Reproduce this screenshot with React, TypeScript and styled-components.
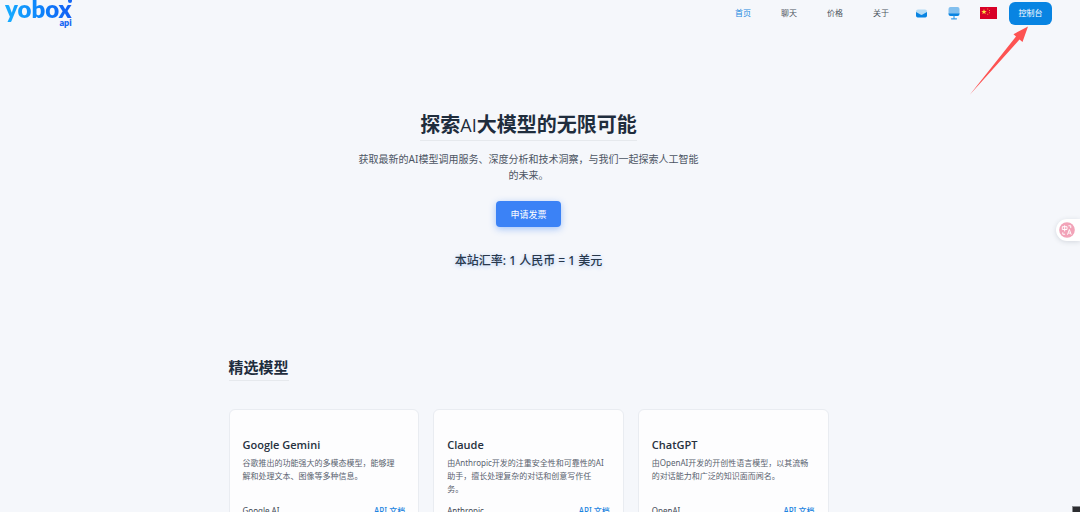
import React from 'react';
import styled, { createGlobalStyle } from 'styled-components';

const GlobalStyle = createGlobalStyle`
  * { box-sizing: border-box; }
  body {
    margin: 0;
    background: #f5f7fb;
    color: #1f2d3d;
    font-family: "Noto Sans", "Noto Sans CJK SC", sans-serif;
  }
  h1, h2, h3, p { margin: 0; }
`;

const Page = styled.div`
  position: relative;
  height: 100vh;
  overflow: hidden;
`;

const Header = styled.header`
  display: flex;
  justify-content: space-between;
  align-items: flex-start;
  height: 28px;
  padding: 0 28px 0 5px;
`;

const Logo = styled.a`
  position: relative;
  display: flex;
  flex-direction: column;
  align-items: flex-end;
  font-family: Lato, sans-serif;
  font-weight: 800;
  text-decoration: none;
`;

const LogoName = styled.span`
  margin-bottom: -6px;
  padding-bottom: 5px;
  font-size: 24px;
  line-height: 18px;
  background: linear-gradient(75deg, #16a9ff 10%, #0d86fb 50%, #1262f5 90%);
  background-clip: text;
  color: transparent;
`;

const LogoSub = styled.span`
  font-size: 9px;
  line-height: 12px;
  color: #1767f2;
`;

const LogoDot = styled.span`
  position: absolute;
  top: 0;
  right: 0;
  width: 4px;
  height: 3px;
  border-radius: 0 0 2px 2px;
  background: #1668f5;
`;

const Actions = styled.div`
  display: flex;
  align-items: center;
  height: 26px;
`;

const Nav = styled.nav`
  display: flex;
  gap: 30px;
  margin-right: 27px;
`;

const NavLink = styled.a<{ $active?: boolean }>`
  font-size: 8px;
  line-height: 12px;
  color: ${p => (p.$active ? '#1c8ae0' : '#4d5661')};
  text-decoration: none;
`;

const IconButton = styled.button`
  display: flex;
  padding: 0;
  border: 0;
  background: none;
`;

const Icons = styled.div`
  display: flex;
  align-items: center;
  gap: 19px;
  margin-right: 12px;
`;

const ConsoleButton = styled.button`
  width: 43px;
  height: 23px;
  padding: 0;
  border: 0;
  border-radius: 6px;
  background: #0884e2;
  color: #fff;
  font: 400 8px/12px "Noto Sans", "Noto Sans CJK SC", sans-serif;
`;

const Content = styled.div`
  padding-right: 23px;
`;

const Main = styled.main`
  max-width: 600px;
  margin: 0 auto;
`;

const Hero = styled.section`
  display: flex;
  flex-direction: column;
  align-items: center;
  padding-top: 82px;
  text-align: center;
`;

const HeroTitle = styled.h1`
  height: 31px;
  border-bottom: 1px solid #e6e9ed;
  font-size: 20px;
  line-height: 30px;
  font-weight: 700;
`;

const Latin = styled.span`
  font-family: "Open Sans", sans-serif;
  font-size: 18px;
  font-weight: 400;
`;

const HeroText = styled.p`
  margin-top: 10px;
  font-size: 10px;
  line-height: 16px;
  color: #4c5563;
  white-space: pre-line;
`;

const InvoiceButton = styled.button`
  width: 65px;
  height: 26px;
  margin-top: 18px;
  padding: 2px 0 0;
  border: 0;
  border-radius: 4px;
  background: #3b82f6;
  color: #fff;
  box-shadow: 0 2px 7px rgba(59, 130, 246, 0.45);
  font: 400 9px/14px "Noto Sans", "Noto Sans CJK SC", sans-serif;
`;

const Rate = styled.p`
  margin-top: 25px;
  font-size: 12px;
  line-height: 18px;
  font-weight: 500;
  color: #28384c;
  text-shadow: 0 1px 4px rgba(59, 130, 246, 0.4);
`;

const SectionTitle = styled.h2`
  display: inline-block;
  height: 25px;
  margin-top: 86px;
  border-bottom: 1px solid #e6e9ed;
  font-size: 15px;
  line-height: 23px;
  font-weight: 700;
`;

const Cards = styled.div`
  display: grid;
  grid-template-columns: repeat(3, 1fr);
  gap: 14px;
  margin-top: 28px;
`;

const Card = styled.article`
  padding: 27px 13px 14px;
  border: 1px solid #e9ecf1;
  border-radius: 6px;
  background: #fdfdfe;
`;

const CardTitle = styled.h3`
  font-family: "Open Sans", "Noto Sans CJK SC", sans-serif;
  font-size: 11px;
  line-height: 15px;
  font-weight: 600;
  color: #27313f;
`;

const CardText = styled.p`
  height: 39px;
  margin-top: 4px;
  font-size: 8px;
  line-height: 13px;
  color: #59626e;
  white-space: pre;
`;

const CardFooter = styled.div`
  display: flex;
  justify-content: space-between;
  margin-top: 10px;
  font-size: 8px;
  line-height: 12px;
  font-weight: 400;
  color: #3f4854;
`;

const DocLink = styled.a`
  color: #1c84e0;
  font-weight: 500;
  text-decoration: none;
`;

const Arrow = styled.svg`
  position: absolute;
  top: 24px;
  right: 48px;
`;

const Translate = styled.button`
  position: absolute;
  top: 219px;
  right: 0;
  display: flex;
  width: 24px;
  padding: 3px;
  border: 0;
  border-radius: 11px 0 0 11px;
  background: #fff;
  box-shadow: 0 1px 5px rgba(40, 50, 70, 0.16);
`;

const Corner = styled.div`
  position: absolute;
  right: 0;
  bottom: 0;
  width: 8px;
  height: 6px;
  border: 1px solid #8a8c90;
  border-width: 1px 0 0 1px;
  background: #2c2d30;
`;

const links = ['首页', '聊天', '价格', '关于'];

const models = [
  { name: 'Google Gemini', text: '谷歌推出的功能强大的多模态模型，能够理\n解和处理文本、图像等多种信息。', vendor: 'Google AI' },
  { name: 'Claude', text: '由Anthropic开发的注重安全性和可靠性的AI\n助手，擅长处理复杂的对话和创意写作任\n务。', vendor: 'Anthropic' },
  { name: 'ChatGPT', text: '由OpenAI开发的开创性语言模型，以其流畅\n的对话能力和广泛的知识面而闻名。', vendor: 'OpenAI' },
];

export default function App() {
  return (
    <Page>
      <GlobalStyle />
      <Header>
        <Logo href="#">
          <LogoName>yobox</LogoName>
          <LogoSub>api</LogoSub>
          <LogoDot />
        </Logo>
        <Actions>
          <Nav>
            {links.map((l, i) => (
              <NavLink key={l} href="#" $active={i === 0}>{l}</NavLink>
            ))}
          </Nav>
          <Icons>
            <IconButton aria-label="Messages">
              <svg width="11" height="9" viewBox="0 0 11 9">
                <path d="M2 .5h7a2 2 0 0 1 2 2V5H0V2.500a2 2 0 0 1 2-2z" fill="#b5dcf5" />
                <path d="M0 3l4 2.300a3 3 0 0 0 3 0L11 3v3.800A1.700 1.700 0 0 1 9.300 8.500H1.700A1.700 1.700 0 0 1 0 6.800z" fill="#0884e2" />
              </svg>
            </IconButton>
            <IconButton aria-label="Theme">
              <svg width="15" height="14" viewBox="0 0 15 14">
                <path d="M4.500 1h7a2 2 0 0 1 2 2v5h-11V3a2 2 0 0 1 2-2z" fill="#82bfee" />
                <path d="M2.500 7.500h11V8a2 2 0 0 1-2 2h-7a2 2 0 0 1-2-2z" fill="#0884e2" />
                <path d="M8 10v2.500M5.500 12.800h5" stroke="#3b9de8" strokeWidth="1.200" strokeLinecap="round" />
              </svg>
            </IconButton>
            <IconButton aria-label="Language">
              <svg width="17" height="12" viewBox="0 0 17 12">
                <path d="M0 0h17v12H0z" fill="#d80027" />
                <path d="M4 2l.7 2h2L5.100 5.200l.6 2L4 6 2.300 7.200l.6-2L1.300 4h2z" fill="#ffda44" />
                <path d="M7.200 1.500h1v1h-1zM9 3h1v1H9zM9 5.200h1v1H9zM7.200 6.800h1v1h-1z" fill="#f29a35" />
              </svg>
            </IconButton>
          </Icons>
          <ConsoleButton>控制台</ConsoleButton>
        </Actions>
      </Header>
      <Content>
        <Main>
          <Hero>
            <HeroTitle>探索<Latin>AI</Latin>大模型的无限可能</HeroTitle>
            <HeroText>{'获取最新的AI模型调用服务、深度分析和技术洞察，与我们一起探索人工智能\n的未来。'}</HeroText>
            <InvoiceButton>申请发票</InvoiceButton>
            <Rate>本站汇率: 1 人民币 = 1 美元</Rate>
          </Hero>
          <SectionTitle>精选模型</SectionTitle>
          <Cards>
            {models.map(m => (
              <Card key={m.name}>
                <CardTitle>{m.name}</CardTitle>
                <CardText>{m.text}</CardText>
                <CardFooter>
                  <span>{m.vendor}</span>
                  <DocLink href="#">API 文档</DocLink>
                </CardFooter>
              </Card>
            ))}
          </Cards>
        </Main>
      </Content>
      <Arrow width="64" height="72" viewBox="0 0 64 72" aria-hidden="true">
        <path d="M1.800 70.800L51.500 15.500 54.500 18 60 2.500 45.500 10.200 48 12.500z" fill="#fd5352" />
      </Arrow>
      <Translate aria-label="Translate">
        <svg width="16" height="16" viewBox="0 0 17 17">
          <circle cx="8.500" cy="8.500" r="8.300" fill="#f2a3b8" />
          <path d="M3.500 5h5v3h-5zM6 3.500v6.500M10 4h2.500v2.500M4 11v2h2.500M9 13.500l2-5.500 2 5.500M9.800 11.800h2.500" fill="none" stroke="#fff" strokeWidth="1" />
        </svg>
      </Translate>
      <Corner />
    </Page>
  );
}
